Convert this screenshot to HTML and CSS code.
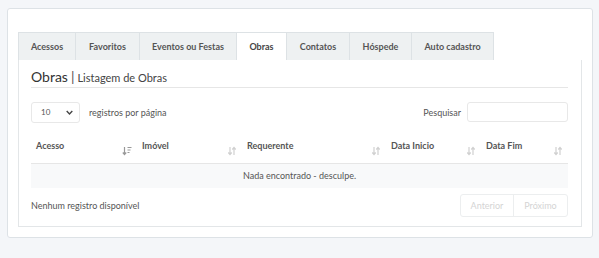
FILE: index.html
```html
<!DOCTYPE html>
<html lang="pt">
<head>
<meta charset="utf-8">
<link rel="stylesheet" href="styles.css">
</head>
<body>
<div class="card">
  <ul class="tabs">
    <li class="tab">Acessos</li>
    <li class="tab">Favoritos</li>
    <li class="tab">Eventos ou Festas</li>
    <li class="tab active">Obras</li>
    <li class="tab">Contatos</li>
    <li class="tab">Hóspede</li>
    <li class="tab">Auto cadastro</li>
  </ul>
  <div class="panel">
    <h2 class="title"><span class="t-main">Obras</span><span class="t-sep">|</span><span class="t-sub">Listagem de Obras</span></h2>
    <div class="controls">
      <div class="length">
        <div class="select"><span>10</span><svg class="chev" viewBox="0 0 10 6" width="7" height="5"><path d="M1 1l4 4 4-4" fill="none" stroke="#444" stroke-width="2"/></svg></div>
        <span class="label">registros por página</span>
      </div>
      <div class="search">
        <span class="label">Pesquisar</span>
        <div class="input"></div>
      </div>
    </div>
    <table class="grid">
      <thead>
        <tr>
          <th class="c1"><div class="th"><span>Acesso</span><svg class="sort on" viewBox="0 0 10 10" width="10" height="10"><path d="M2.5 1v7.5M0.8 6.5l1.7 2 1.7-2" fill="none" stroke="currentColor" stroke-width="1.2"/><path d="M5.5 1.5h4M5.5 4h3M5.5 6.5h2" stroke="currentColor" stroke-width="1.2"/></svg></div></th>
          <th class="c2"><div class="th"><span>Imóvel</span><svg class="sort" viewBox="0 0 10 10" width="10" height="10"><path d="M3 1v7.5M1.3 6.5l1.7 2 1.7-2M7 9V1.5M5.3 3.5l1.7-2 1.7 2" fill="none" stroke="currentColor" stroke-width="1.2"/></svg></div></th>
          <th class="c3"><div class="th"><span>Requerente</span><svg class="sort" viewBox="0 0 10 10" width="10" height="10"><path d="M3 1v7.5M1.3 6.5l1.7 2 1.7-2M7 9V1.5M5.3 3.5l1.7-2 1.7 2" fill="none" stroke="currentColor" stroke-width="1.2"/></svg></div></th>
          <th class="c4"><div class="th"><span>Data Inicio</span><svg class="sort" viewBox="0 0 10 10" width="10" height="10"><path d="M3 1v7.5M1.3 6.5l1.7 2 1.7-2M7 9V1.5M5.3 3.5l1.7-2 1.7 2" fill="none" stroke="currentColor" stroke-width="1.2"/></svg></div></th>
          <th class="c5"><div class="th"><span>Data Fim</span><svg class="sort" viewBox="0 0 10 10" width="10" height="10"><path d="M3 1v7.5M1.3 6.5l1.7 2 1.7-2M7 9V1.5M5.3 3.5l1.7-2 1.7 2" fill="none" stroke="currentColor" stroke-width="1.2"/></svg></div></th>
        </tr>
      </thead>
      <tbody>
        <tr><td colspan="5" class="empty">Nada encontrado - desculpe.</td></tr>
      </tbody>
    </table>
    <div class="footer">
      <span class="info">Nenhum registro disponível</span>
      <div class="pager"><span class="pbtn">Anterior</span><span class="pbtn">Próximo</span></div>
    </div>
  </div>
</div>
</body>
</html>
```

FILE: styles.css
```css
* { box-sizing: border-box; }
html, body { margin: 0; padding: 0; }
body {
  background: #f4f6f9;
  font-family: "Source Sans Pro", Lato, "Open Sans", sans-serif;
  color: #555;
  font-size: 9px;
  width: 599px;
  height: 258px;
  overflow: hidden;
}
.card {
  margin: 8px 7px 0 7px;
  width: 586px;
  height: 230px;
  background: #fff;
  border: 1px solid #dde2e6;
  border-radius: 3px;
  padding: 23px 9px 0 10px;
}
.tabs {
  list-style: none;
  margin: 0;
  padding: 0;
  display: flex;
  height: 28px;
}
.tab {
  height: 28px;
  display: flex;
  align-items: center;
  justify-content: center;
  background: #eef1f2;
  border: 1px solid #dde2e5;
  border-bottom: none;
  border-left: none;
  font-weight: 700;
  font-size: 9px;
  color: #555;
}
.tab:first-child { border-left: 1px solid #dde2e5; }
.tab:nth-child(1) { width: 58px; }
.tab:nth-child(2) { width: 64px; }
.tab:nth-child(3) { width: 97px; }
.tab:nth-child(4) { width: 50px; }
.tab:nth-child(5) { width: 63px; }
.tab:nth-child(6) { width: 62px; }
.tab:nth-child(7) { width: 82px; }
.tab.active { background: #fff; color: #444; }
.panel {
  width: 564px;
  height: 167px;
  border: 1px solid #e3e6e8;
  border-top: none;
  padding: 0 13px 0 12px;
}
.title {
  margin: 0;
  height: 28px;
  padding-top: 9px;
  border-bottom: 1px solid #e6e6e6;
  font-weight: 400;
  color: #333;
  line-height: 16px;
  white-space: nowrap;
}
.t-main { font-size: 14px; }
.t-sep { font-size: 14px; color: #555; margin: 0 3px 0 3px; }
.t-sub { font-size: 11px; color: #444; }
.controls {
  display: flex;
  justify-content: space-between;
  align-items: center;
  margin-top: 13px;
  height: 22px;
}
.length, .search { display: flex; align-items: center; }
.select {
  width: 49px;
  height: 21px;
  border: 1px solid #e8e8e8;
  border-radius: 3px;
  display: flex;
  align-items: center;
  justify-content: space-between;
  padding: 0 6px 0 9px;
  font-size: 8px;
  color: #555;
}
.length .label { margin-left: 9px; color: #555; }
.search .label { margin-right: 6px; }
.input {
  width: 101px;
  height: 20px;
  border: 1px solid #e8e8e8;
  border-radius: 3px;
}
.grid {
  width: 100%;
  border-collapse: collapse;
  margin-top: 13px;
}
.grid th {
  height: 27px;
  padding: 0 0 0 5px;
  text-align: left;
  font-weight: 700;
  font-size: 9px;
  color: #555;
  border-bottom: 1px solid #e6e6e6;
}
.th { display: flex; justify-content: space-between; align-items: flex-start; padding-right: 5px; }
.th span { margin-top: -3px; }
.sort { color: #d0d0d0; margin-top: 3px; }
.sort.on { color: #999; }
.c1 { width: 106px; }
.c2 { width: 105px; }
.c3 { width: 144px; }
.c4 { width: 95px; }
.empty {
  height: 25px;
  background: #f8f9fa;
  text-align: center;
  font-size: 9px;
  color: #555;
}
.footer {
  display: flex;
  justify-content: space-between;
  align-items: center;
  margin-top: 6px;
}
.pager {
  display: flex;
  border: 1px solid #eceeef;
  border-radius: 3px;
  height: 23px;
}
.pbtn {
  display: flex;
  align-items: center;
  justify-content: center;
  color: #d4d4d4;
  font-size: 9px;
}
.pbtn:first-child { width: 53px; border-right: 1px solid #eceeef; }
.pbtn:last-child { width: 53px; }
```
